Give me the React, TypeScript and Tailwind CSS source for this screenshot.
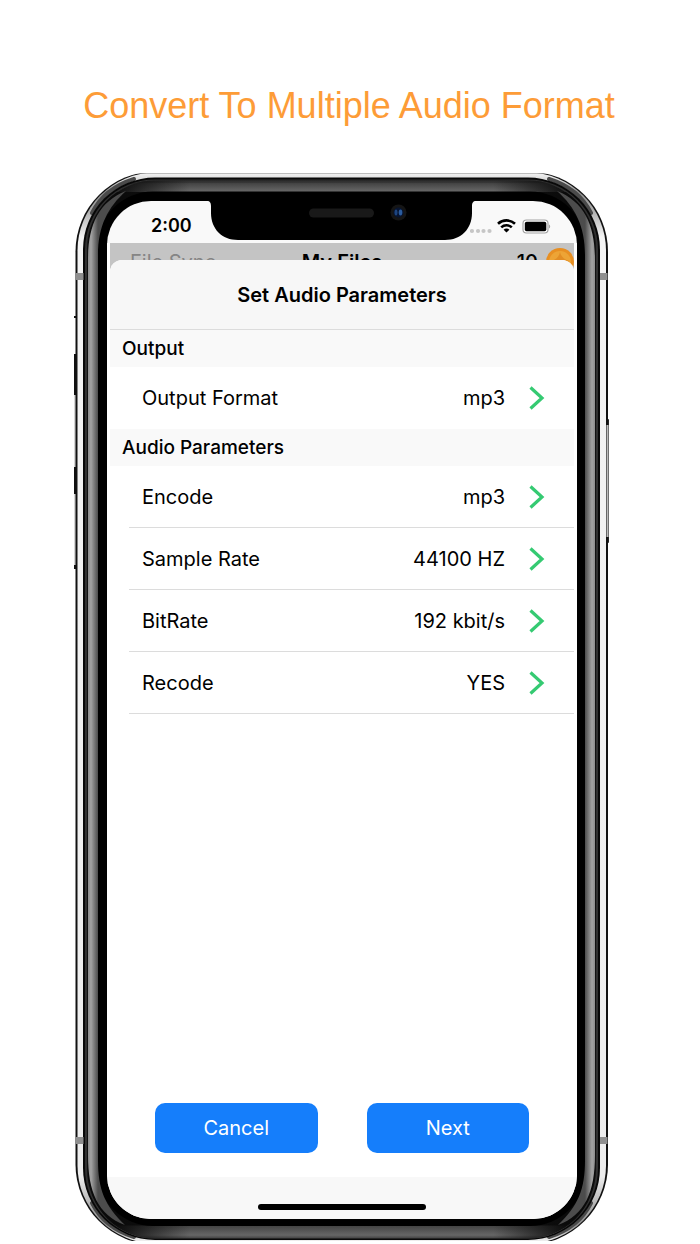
import React from 'react';

const parameters = [
  { label: 'Encode', value: 'mp3' },
  { label: 'Sample Rate', value: '44100 HZ' },
  { label: 'BitRate', value: '192 kbit/s' },
  { label: 'Recode', value: 'YES' },
];

const PhoneFrame = () => {
  return (
    <svg
      className="absolute inset-0 w-full h-full overflow-visible"
      viewBox="75 173 534 1068"
      preserveAspectRatio="none"
      aria-hidden="true"
    >
      <defs>
        <clipPath id="body">
          <rect x="70" y="173.5" width="545" height="1067.5" />
        </clipPath>
        <clipPath id="band">
          <rect x="77.5" y="172.5" width="528.5" height="1071" rx="78" />
        </clipPath>
        <clipPath id="glass">
          <rect x="88" y="180.5" width="507" height="1058" rx="67" />
        </clipPath>
        <linearGradient id="steel" gradientUnits="userSpaceOnUse" x1="0" y1="173" x2="0" y2="1241">
          <stop offset="0" stopColor="#f4f4f4" />
          <stop offset="0.006" stopColor="#dcdcdc" />
          <stop offset="0.018" stopColor="#8a8a8a" />
          <stop offset="0.036" stopColor="#b0b0b0" />
          <stop offset="0.06" stopColor="#f4f4f4" />
          <stop offset="0.94" stopColor="#ededed" />
          <stop offset="0.965" stopColor="#b5b5b5" />
          <stop offset="0.985" stopColor="#8a8a8a" />
          <stop offset="1" stopColor="#f0f0f0" />
        </linearGradient>
        <linearGradient id="topBar" gradientUnits="userSpaceOnUse" x1="0" y1="180" x2="0" y2="192">
          <stop offset="0" stopColor="#4a4a4a" />
          <stop offset="0.15" stopColor="#2c2c2c" />
          <stop offset="0.3" stopColor="#454545" />
          <stop offset="1" stopColor="#6a6a6a" />
        </linearGradient>
        <linearGradient id="bottomBar" gradientUnits="userSpaceOnUse" x1="0" y1="1226" x2="0" y2="1239">
          <stop offset="0" stopColor="#444" />
          <stop offset="0.7" stopColor="#666" />
          <stop offset="1" stopColor="#3c3c3c" />
        </linearGradient>
        <linearGradient id="leftSide" gradientUnits="userSpaceOnUse" x1="88" y1="0" x2="98" y2="0">
          <stop offset="0" stopColor="#8c8c8c" />
          <stop offset="0.3" stopColor="#a3a3a3" />
          <stop offset="1" stopColor="#4c4c4c" />
        </linearGradient>
        <linearGradient id="rightSide" gradientUnits="userSpaceOnUse" x1="585" y1="0" x2="595" y2="0">
          <stop offset="0" stopColor="#4c4c4c" />
          <stop offset="0.7" stopColor="#a3a3a3" />
          <stop offset="1" stopColor="#8c8c8c" />
        </linearGradient>
        <linearGradient id="fade" gradientUnits="userSpaceOnUse" x1="88" y1="0" x2="595" y2="0">
          <stop offset="0.05" stopColor="#0a0a0a" />
          <stop offset="0.2" stopColor="#0a0a0a" stopOpacity="0" />
          <stop offset="0.8" stopColor="#0a0a0a" stopOpacity="0" />
          <stop offset="0.95" stopColor="#0a0a0a" />
        </linearGradient>
      </defs>
      {/* side keys */}
      <path d="M75.5 316v2M75.5 354v41M75.5 467v27M75.5 565v4" stroke="#111" strokeWidth="3" />
      <path d="M75 395v72M75 494v71" stroke="#aaa" strokeWidth="1" />
      <rect x="605" y="419" width="4" height="124" rx="1" fill="#222" />
      {/* steel band */}
      <g clipPath="url(#body)">
        <rect x="75.5" y="171.5" width="532.5" height="1073" rx="80" fill="#111" />
        <rect x="77.5" y="172.5" width="528.5" height="1071" rx="78" fill="url(#steel)" />
        <g clipPath="url(#band)" fill="none" stroke="#4a4a4a" strokeWidth="4" strokeLinecap="round">
          <path d="M92 213C101 195 115 185 134 179M591 213C582 195 568 185 549 179" />
          <path d="M92 1203C101 1221 115 1231 134 1237M591 1203C582 1221 568 1231 549 1237" />
        </g>
        <rect x="83" y="177.5" width="517" height="1062.5" rx="72" fill="#080808" />
        <rect x="85" y="179.5" width="513" height="1059" rx="70" fill="#303030" />
        <rect x="87" y="180.5" width="509" height="1057" rx="68" fill="#111" />
      </g>
      <rect x="606.5" y="425" width="2" height="112" fill="#bbb" />
      {/* glass edge */}
      <g clipPath="url(#glass)">
        <rect x="88" y="180.5" width="507" height="11.5" fill="url(#topBar)" />
        <rect x="88" y="1225.5" width="507" height="13" fill="url(#bottomBar)" />
        <rect x="88" y="180.5" width="507" height="1058" fill="url(#fade)" />
      </g>
      <rect x="97" y="191.5" width="489" height="1034.5" rx="56" fill="#000" />
      <path
        d="M126 191C98 202 88 226 88 260V1155C88 1192 98 1215 125 1225C105 1206 98 1190 98 1160V255C98 226 108 207 126 191Z"
        fill="url(#leftSide)"
      />
      <path
        d="M557 191C585 202 595 226 595 260V1155C595 1192 585 1215 558 1225C578 1206 585 1190 585 1160V255C585 226 575 207 557 191Z"
        fill="url(#rightSide)"
      />
      <path
        d="M75.5 273h8v7h-8zM600 273h7.5v7H600zM75.5 1137h8v7h-8zM600 1137h7.5v7H600z"
        fill="#8f8f8f"
      />
    </svg>
  );
};

const Notch = () => {
  return (
    <svg
      className="absolute top-0 left-[100px] w-[269px] h-10"
      viewBox="0 0 269 40"
      aria-hidden="true"
    >
      <path d="M0 0C3 0 4 2 4 5V12C4 28 15 39 31 39H238C254 39 265 28 265 12V5C265 2 266 0 269 0Z" />
      <rect x="102" y="7.5" width="65" height="9" rx="4.5" fill="#191919" />
      <circle cx="191.5" cy="11.5" r="8" fill="#151515" />
      <circle cx="191.5" cy="11.5" r="5" fill="#071430" />
      <ellipse cx="189" cy="11.5" rx="1.5" ry="3" fill="#1d4580" />
      <ellipse cx="193.5" cy="11.5" rx="1.8" ry="3" fill="#2b5c9e" />
    </svg>
  );
};

const StatusBar = () => {
  return (
    <div className="relative flex items-center justify-between h-[42px] pt-2 pl-11 pr-[26px]">
      <Notch />
      <span className="text-[18px] leading-6 font-semibold">2:00</span>
      <svg className="w-[81px] h-4" viewBox="0 0 81 16" aria-hidden="true">
        <g fill="#c6c6c6">
          <circle cx="2" cy="13" r="2.1" />
          <circle cx="8" cy="13" r="2.1" />
          <circle cx="13.5" cy="13" r="2.1" />
          <circle cx="19.5" cy="13" r="2.1" />
        </g>
        <g fill="none" stroke="#000" strokeWidth="2.6">
          <path d="M28 5.8a12.3 12.3 0 0 1 17 0" />
          <path d="M31.2 9.4a7.8 7.8 0 0 1 10.6 0" />
        </g>
        <path d="M36.5 14.6L33.6 11.8a4 4 0 0 1 5.8 0Z" />
        <rect x="53" y="2" width="25" height="13" rx="3.5" fill="#fff" stroke="#a3a3a3" strokeWidth="1.2" />
        <rect x="54.8" y="3.7" width="21.5" height="9.6" rx="1.8" />
        <path d="M79 6.5v4c1.6-.6 1.6-3.4 0-4Z" fill="#a3a3a3" />
      </svg>
    </div>
  );
};

const NavBar = () => {
  return (
    <div className="grid grid-cols-3 items-center h-[38px] overflow-hidden text-[20px] leading-6 bg-[#c4c4c4]">
      <span className="pl-5 text-[#858585]">File Sync</span>
      <span className="text-center font-semibold">My Files</span>
      <span className="flex items-center justify-end gap-2 font-medium">
        10
        <svg className="w-7 h-7 shrink-0" viewBox="0 0 28 28" aria-hidden="true">
          <circle cx="14" cy="14" r="14" fill="#e88f22" />
          <circle cx="14" cy="14" r="11" fill="#eda436" />
          <path d="M14 4c1 5 4 7 9 9l-6 7h-7l-5-7c5-1 8-4 9-9Z" fill="#e28d24" />
        </svg>
      </span>
    </div>
  );
};

const SectionTitle = ({ children }: { children: React.ReactNode }) => {
  return (
    <h3 className="flex items-center h-[37px] px-3 text-[19px] leading-6 font-medium bg-[#f9f9f9]">
      {children}
    </h3>
  );
};

const Row = ({ label, value, last }: { label: string; value: string; last?: boolean }) => {
  return (
    <button type="button" className="block w-full pl-[19px] bg-white">
      <span
        className={`flex items-center w-full h-[62px] pl-[13px] pr-[29px] text-[20px] leading-6 ${
          last ? '' : 'border-b border-[#dcdcdc]'
        }`}
      >
        <span className="grow text-left">{label}</span>
        <span>{value}</span>
        <svg className="w-4 h-6 ml-6" viewBox="0 0 16 24" fill="none" aria-hidden="true">
          <path d="M1.5 1.5L13 12L1.5 22.5" stroke="#35ca72" strokeWidth="3.2" />
        </svg>
      </span>
    </button>
  );
};

const App = () => {
  return (
    <div className="bg-white overflow-hidden">
      <h1 className="pt-20 pr-0.5 mb-[41px] text-center text-[36px] leading-[52px] text-[#fd9c37] font-['Liberation_Sans',sans-serif]">
        Convert To Multiple Audio Format
      </h1>
      <div className="pr-4">
        <div className="relative w-full max-w-[534px] aspect-[1/2] mx-auto pt-7 px-8 pb-[22px] mb-[3px] text-black font-['Inter',sans-serif]">
          <PhoneFrame />
          <div className="relative flex flex-col h-full rounded-[44px] overflow-hidden bg-[#f9f9f9]">
            <StatusBar />
            <div className="grow flex flex-col px-[3px] bg-white">
              <NavBar />
              <div className="relative grow flex flex-col -mt-[21px] rounded-t-xl overflow-hidden bg-white">
                <h2 className="flex items-center justify-center h-[70px] text-[20px] leading-6 font-semibold bg-[#f7f7f7] border-b border-[#dcdcdc]">
                  Set Audio Parameters
                </h2>
                <SectionTitle>Output</SectionTitle>
                <Row label="Output Format" value="mp3" last />
                <SectionTitle>Audio Parameters</SectionTitle>
                {parameters.map((item) => (
                  <Row key={item.label} label={item.label} value={item.value} />
                ))}
                <div className="mt-auto grid grid-cols-2 gap-[49px] px-[45px] pb-6 text-[20px] leading-6 text-white">
                  <button type="button" className="h-[50px] rounded-[10px] bg-[#157efb]">
                    Cancel
                  </button>
                  <button type="button" className="h-[50px] rounded-[10px] bg-[#157efb]">
                    Next
                  </button>
                </div>
              </div>
            </div>
            <div className="flex justify-center items-end h-[42px] pb-[9px] bg-[#f8f8f8]">
              <div className="w-[168px] h-[6px] rounded-full bg-black"></div>
            </div>
          </div>
        </div>
      </div>
    </div>
  );
};
export default App;
